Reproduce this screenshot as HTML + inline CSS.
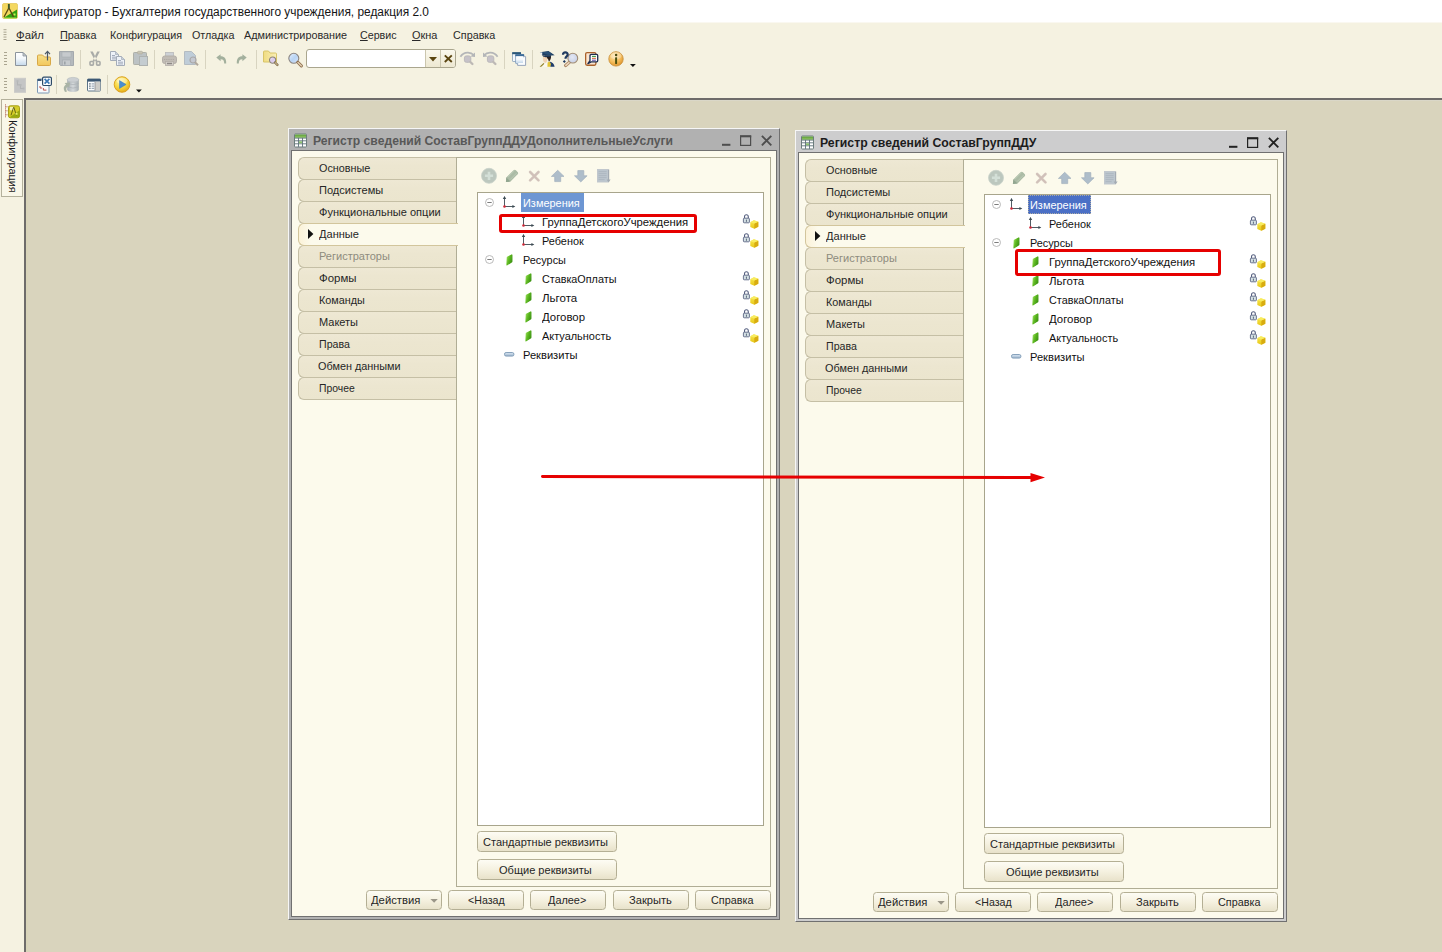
<!DOCTYPE html>
<html><head><meta charset="utf-8"><title>Конфигуратор</title><style>
*{box-sizing:border-box;margin:0;padding:0}
html,body{width:1442px;height:952px;overflow:hidden}
body{background:#f5f2e1;font-family:"Liberation Sans",sans-serif;font-size:11.5px;color:#000;position:relative}
.abs{position:absolute}
svg{overflow:visible}
.t{position:absolute;white-space:pre;line-height:1}
#titlebar{position:absolute;left:0;top:0;width:1442px;height:23px;background:linear-gradient(#fff 22px,#faf8f0 22px)}
#work{position:absolute;left:24px;top:98px;width:1418px;height:854px;background:#d9d4bd;border-left:2px solid #6e6c6a;border-top:2px solid #6e6c6a;box-shadow:inset 2px 0 0 #d8d4b9,inset 0 1px 0 #dad7c8}
#sidetab{position:absolute;left:1px;top:99px;width:22px;height:98px;border:1px solid #b4b19c;background:#f9f7e8}
#search{position:absolute;left:306px;top:49px;width:150px;height:19px;border:1px solid #aaa68e;border-radius:3px;background:#fff;overflow:hidden}
#search i{position:absolute;top:0;height:17px;border-left:1px solid #cbc6ae;background:linear-gradient(#faf8ec,#ede8d2)}
.win{position:absolute;width:492px;height:791px}
.win .frame{position:absolute;left:0;top:-1px;width:492px;height:792px;border:1px solid;border-color:#f6f6f6 #707070 #707070 #f6f6f6}
.win .content{position:absolute;left:3px;top:21px;width:486px;height:767px;background:#fcfaec;border:1px solid #707070}
.tab{position:absolute;left:10px;width:159px;height:23px;border:1px solid #c5bfa5;border-right:none;border-radius:6px 0 0 6px;background:linear-gradient(#eee8d4,#ece6d0 40%,#ebe5ce)}
.tab.act{background:linear-gradient(90deg,#fbf2d8,#fcfaec 12px);border-color:#d2c59c;width:160px;z-index:3}
.panel{position:absolute;left:168px;top:28px;width:315px;height:730px;border:1px solid #b0ad95;background:#fcfaec}
.tree{position:absolute;left:189px;top:63px;width:287px;height:634px;border:1px solid #a8a58c;background:#fff}
.btn{position:absolute;border:1px solid #b4af94;border-radius:3.5px;background:linear-gradient(#fdfcf4,#f5f1e0 50%,#e8e2ca)}
.red{position:absolute;border:3px solid #e60000;border-radius:3px}
.wt{z-index:5}
</style></head><body>
<svg width="0" height="0" style="position:absolute"><defs>
<linearGradient id="gDoc" x1="0" y1="0" x2="0" y2="1"><stop offset="0" stop-color="#ffffff"/><stop offset="0.45" stop-color="#f4f8fc"/><stop offset="1" stop-color="#c4d8ea"/></linearGradient>
<linearGradient id="gFold" x1="0" y1="0" x2="0" y2="1"><stop offset="0" stop-color="#f6e08a"/><stop offset="1" stop-color="#f2c75c"/></linearGradient>
<linearGradient id="gFold2" x1="0" y1="0" x2="1" y2="0"><stop offset="0" stop-color="#f0dc80"/><stop offset="1" stop-color="#f8eeb8"/></linearGradient>
<radialGradient id="gPlay" cx="0.4" cy="0.3" r="0.8"><stop offset="0" stop-color="#fff6b0"/><stop offset="0.5" stop-color="#f8d840"/><stop offset="1" stop-color="#e0a010"/></radialGradient>
<radialGradient id="gInfo" cx="0.4" cy="0.3" r="0.8"><stop offset="0" stop-color="#fde6b0"/><stop offset="0.55" stop-color="#f4bc58"/><stop offset="1" stop-color="#d88820"/></radialGradient>
<linearGradient id="gGreen" x1="0" y1="0" x2="1" y2="0.6"><stop offset="0" stop-color="#9ce060"/><stop offset="0.45" stop-color="#62bc24"/><stop offset="1" stop-color="#3c9410"/></linearGradient>
<linearGradient id="gCube1" x1="0" y1="0" x2="0" y2="1"><stop offset="0" stop-color="#f8e850"/><stop offset="1" stop-color="#e8c818"/></linearGradient>
<linearGradient id="gBar" x1="0" y1="0" x2="0" y2="1"><stop offset="0" stop-color="#dce8f4"/><stop offset="1" stop-color="#9cb4cc"/></linearGradient>
<linearGradient id="gTblH" x1="0" y1="0" x2="0" y2="1"><stop offset="0" stop-color="#5a9a38"/><stop offset="1" stop-color="#9ad068"/></linearGradient>
<linearGradient id="gLens" x1="0" y1="0" x2="1" y2="1"><stop offset="0" stop-color="#e8f0fc"/><stop offset="0.5" stop-color="#b8d4f4"/><stop offset="1" stop-color="#d8e4f8"/></linearGradient>
<linearGradient id="gLensP" x1="0" y1="0" x2="1" y2="1"><stop offset="0" stop-color="#efe6f8"/><stop offset="0.5" stop-color="#d8c8ec"/><stop offset="1" stop-color="#e8e0f4"/></linearGradient>
<radialGradient id="gLens2" cx="0.45" cy="0.4" r="0.7"><stop offset="0" stop-color="#e4e8f4"/><stop offset="0.7" stop-color="#ccd4e8"/><stop offset="1" stop-color="#dcd8e0"/></radialGradient>
<linearGradient id="gDb" x1="0" y1="0" x2="1" y2="0"><stop offset="0" stop-color="#a8b0b4"/><stop offset="0.5" stop-color="#d4d8da"/><stop offset="1" stop-color="#a4acb0"/></linearGradient>
</defs></svg>
<div id="titlebar"></div>
<svg class="abs" style="left:2px;top:3px;" width="16" height="16" viewBox="0 0 16 16"><rect x="0.5" y="0.5" width="15" height="15" rx="1.5" fill="#f4d860" stroke="#e8d070"/><path d="M15 6.5 L15 15 L1.5 15 Z" fill="#30a010"/><path d="M2 15 L14.5 15" stroke="#a0e050" stroke-width="1"/><rect x="11.5" y="10.5" width="2" height="2" fill="#c8f050"/><path d="M6.8 1.2 L6.8 5 L2 14 M7 5 L11.5 14" stroke="#5a4a10" stroke-width="1.3" fill="none"/><path d="M6.8 1 L6.8 5.5" stroke="#3a5a30" stroke-width="1.8"/></svg>
<span class="t" style="left:23.1px;top:6.3px;font-size:12.5px;color:#141414;transform-origin:0 0;transform:scaleX(0.9525);">Конфигуратор - Бухгалтерия государственного учреждения, редакция 2.0</span>
<svg class="abs" style="left:3px;top:29px;" width="4" height="15" viewBox="0 0 4 15"><g transform="translate(0.5,0.2)"><rect x="0" y="0.0" width="3" height="1" fill="#aaa590"/><rect x="0" y="2.45" width="3" height="1" fill="#aaa590"/><rect x="0" y="4.9" width="3" height="1" fill="#aaa590"/><rect x="0" y="7.35" width="3" height="1" fill="#aaa590"/><rect x="0" y="9.8" width="3" height="1" fill="#aaa590"/></g></svg>
<span class="t" style="left:16.1px;top:29.9px;font-size:11.5px;color:#2a2a2a;transform-origin:0 0;transform:scaleX(0.9865);"><u>Ф</u>айл</span>
<span class="t" style="left:60.3px;top:29.9px;font-size:11.5px;color:#2a2a2a;transform-origin:0 0;transform:scaleX(0.9419);"><u>П</u>равка</span>
<span class="t" style="left:110.3px;top:29.9px;font-size:11.5px;color:#2a2a2a;transform-origin:0 0;transform:scaleX(0.9341);">Конфигурация</span>
<span class="t" style="left:191.5px;top:29.9px;font-size:11.5px;color:#2a2a2a;transform-origin:0 0;transform:scaleX(0.9347);">Отладка</span>
<span class="t" style="left:244px;top:29.9px;font-size:11.5px;color:#2a2a2a;transform-origin:0 0;transform:scaleX(0.9401);">Администрирование</span>
<span class="t" style="left:359.9px;top:29.9px;font-size:11.5px;color:#2a2a2a;transform-origin:0 0;transform:scaleX(0.9292);"><u>С</u>ервис</span>
<span class="t" style="left:411.9px;top:29.9px;font-size:11.5px;color:#2a2a2a;transform-origin:0 0;transform:scaleX(0.9501);"><u>О</u>кна</span>
<span class="t" style="left:452.8px;top:29.9px;font-size:11.5px;color:#2a2a2a;transform-origin:0 0;transform:scaleX(0.9371);">Сп<u>р</u>авка</span>
<svg class="abs" style="left:4px;top:52px;" width="3" height="14" viewBox="0 0 3 14"><rect x="0" y="0" width="3" height="1" fill="#aaa590"/><rect x="0" y="3" width="3" height="1" fill="#aaa590"/><rect x="0" y="6" width="3" height="1" fill="#aaa590"/><rect x="0" y="9" width="3" height="1" fill="#aaa590"/><rect x="0" y="12" width="3" height="1" fill="#aaa590"/></svg>
<svg class="abs" style="left:15px;top:52px;" width="12" height="14" viewBox="0 0 12 14"><path d="M0.5 0.5 L8 0.5 L11.5 4 L11.5 13.5 L0.5 13.5 Z" fill="url(#gDoc)" stroke="#8c949c"/><path d="M8 0.5 L8 4 L11.5 4 Z" fill="#c8ccd0" stroke="#8c949c" stroke-width="0.8"/></svg>
<svg class="abs" style="left:37px;top:51px;" width="14" height="15" viewBox="0 0 14 15"><path d="M0.5 5 Q0.5 4 1.5 4 L5.5 4 L7.5 6 L12.5 6 Q13.5 6 13.5 7 L13.5 13.5 Q13.5 14.5 12.5 14.5 L1.5 14.5 Q0.5 14.5 0.5 13.5 Z" fill="url(#gFold)" stroke="#d8a848"/><path d="M10.5 9.5 L10.5 1" stroke="#4a5868" stroke-width="1.2"/><path d="M8 3.2 L10.5 0.4 L13 3.2" stroke="#4a5868" stroke-width="1.2" fill="none"/></svg>
<svg class="abs" style="left:59px;top:51px;" width="15" height="15" viewBox="0 0 15 15"><path d="M0.5 0.5 L14.5 0.5 L14.5 14.5 L1.5 14.5 L0.5 13.5 Z" fill="#b4b9bd" stroke="#a4a9ad"/><rect x="3" y="1" width="9" height="5" fill="#c6cacd" stroke="#a9aeb2" stroke-width="0.6"/><rect x="3.5" y="9" width="8" height="5.5" fill="#c6cacd" stroke="#a4a9ad" stroke-width="0.6"/><rect x="5" y="10.5" width="1.6" height="3" fill="#9ca2a8"/></svg>
<div class="abs" style="left:80px;top:50px;width:1px;height:19px;background:#d8d4c0"></div>
<svg class="abs" style="left:89px;top:51px;" width="12" height="15" viewBox="0 0 12 15"><path d="M1.2 0.4 L3.8 0.4 L8.6 10.6 L6.4 10.6 Z M10.8 0.4 L8.2 0.4 L3.4 10.6 L5.6 10.6 Z" fill="#a9aba8"/><rect x="1" y="10.5" width="3.4" height="3.6" rx="0.8" fill="#f4f1e0" stroke="#a9aba8" stroke-width="1.6"/><rect x="7.6" y="10.5" width="3.4" height="3.6" rx="0.8" fill="#f4f1e0" stroke="#a9aba8" stroke-width="1.6"/></svg>
<svg class="abs" style="left:110px;top:51px;" width="15" height="15" viewBox="0 0 15 15"><path d="M0.5 0.5 L5.5 0.5 L8.5 3.5 L8.5 9.5 L0.5 9.5 Z" fill="#eef2f8" stroke="#a4acb8"/><path d="M5.5 0.5 L5.5 3.5 L8.5 3.5" fill="#c8d0d8" stroke="#a4acb8" stroke-width="0.7"/><path d="M2 4.5 h3 M2 6.2 h5 M2 7.9 h5" stroke="#9aa4b4" stroke-width="0.9"/><path d="M6.5 5.5 L11.5 5.5 L14.5 8.5 L14.5 14.5 L6.5 14.5 Z" fill="#eef2f8" stroke="#a4acb8"/><path d="M11.5 5.5 L11.5 8.5 L14.5 8.5" fill="#c8d0d8" stroke="#a4acb8" stroke-width="0.7"/><path d="M8 9.5 h3 M8 11.2 h5 M8 12.9 h5" stroke="#9aa4b4" stroke-width="0.9"/></svg>
<svg class="abs" style="left:133px;top:51px;" width="15" height="15" viewBox="0 0 15 15"><rect x="0.5" y="1.5" width="13" height="12" rx="0.8" fill="#bcc2c4" stroke="#aeb0a8"/><rect x="4.5" y="0.3" width="5" height="2.6" rx="1" fill="#c8c4b4" stroke="#b0ac9c" stroke-width="0.7"/><rect x="6.5" y="5.5" width="8" height="9" fill="#c4ccd0" stroke="#aeb2b0"/><path d="M6.5 5.5 L6.5 13" stroke="#aeb2b0"/></svg>
<div class="abs" style="left:154px;top:50px;width:1px;height:19px;background:#d8d4c0"></div>
<svg class="abs" style="left:162px;top:52px;" width="15" height="14" viewBox="0 0 15 14"><rect x="3.5" y="0.5" width="8" height="5" fill="#cdd1d6" stroke="#b9b9bb" stroke-width="0.8"/><rect x="0.5" y="4" width="14" height="7.5" rx="2.2" fill="#c1bcb5" stroke="#b3aea8"/><path d="M2 7.5 h11" stroke="#a9a49e" stroke-width="0.8" stroke-dasharray="1.2 1"/><rect x="3.5" y="9.5" width="8" height="4" fill="#d2cec8" stroke="#b3aea8" stroke-width="0.8"/><rect x="5" y="10.8" width="5" height="1.4" fill="#8c8884"/></svg>
<svg class="abs" style="left:184px;top:51px;" width="15" height="15" viewBox="0 0 15 15"><path d="M0.5 0.5 L7.5 0.5 L11.5 4.5 L11.5 13.5 L0.5 13.5 Z" fill="#bfcdd8" stroke="#b4bcc2"/><circle cx="9" cy="9" r="3" fill="#c4c8d0" stroke="#aaa8a8" stroke-width="1.2"/><path d="M11.2 11.4 L14 14.2" stroke="#b0a89c" stroke-width="2"/></svg>
<div class="abs" style="left:205px;top:50px;width:1px;height:19px;background:#d8d4c0"></div>
<svg class="abs" style="left:216px;top:54px;" width="11" height="10" viewBox="0 0 11 10"><g><path d="M0.3 3.6 L4.6 0.2 L4.6 2.2 C8.5 2.2 10.4 4.4 10.2 9.6 L8.2 9.6 C8.2 6.6 7.4 5.2 4.6 5.2 L4.6 7.2 Z" fill="#a3b09d"/></g></svg>
<svg class="abs" style="left:236px;top:54px;" width="11" height="10" viewBox="0 0 11 10"><g transform="translate(11,0) scale(-1,1)"><path d="M0.3 3.6 L4.6 0.2 L4.6 2.2 C8.5 2.2 10.4 4.4 10.2 9.6 L8.2 9.6 C8.2 6.6 7.4 5.2 4.6 5.2 L4.6 7.2 Z" fill="#a3b09d"/></g></svg>
<div class="abs" style="left:256px;top:50px;width:1px;height:19px;background:#d8d4c0"></div>
<svg class="abs" style="left:263px;top:50px;" width="16" height="17" viewBox="0 0 16 17"><g transform="translate(0,0.5)"><path d="M0.5 1.5 Q0.5 0.5 1.5 0.5 L5.5 0.5 L7 2.5 L12.5 2.5 Q13.5 2.5 13.5 3.5 L13.5 11.5 L0.5 11.5 Z" fill="url(#gFold2)" stroke="#d8c468"/><circle cx="9.6" cy="9.6" r="3.1" fill="url(#gLensP)" stroke="#8c8478" stroke-width="1.1"/><path d="M12 12 L14.4 14.4" stroke="#7a6a4a" stroke-width="2.4" stroke-linecap="round"/><path d="M12.2 12.2 L14.3 14.3" stroke="#c8b088" stroke-width="1.1" stroke-linecap="round"/></g></svg>
<svg class="abs" style="left:288px;top:52px;" width="15" height="16" viewBox="0 0 15 16"><g transform="translate(0,0.5)"><circle cx="5.8" cy="5.8" r="5" fill="url(#gLens)" stroke="#8a8480" stroke-width="1.1"/><path d="M9.8 9.8 L13.4 13.4" stroke="#8a6a48" stroke-width="3" stroke-linecap="round"/><path d="M10 10 L13.3 13.3" stroke="#e0cdb0" stroke-width="1.6" stroke-linecap="round"/></g></svg>
<div id="search"><i style="left:118px;width:15px"></i><i style="left:133px;width:16px"></i></div>
<svg class="abs" style="left:429px;top:57px;" width="8" height="5" viewBox="0 0 8 5"><path d="M0 0 L8 0 L4 4.6 Z" fill="#5a4510"/></svg>
<svg class="abs" style="left:444px;top:54px;" width="9" height="9" viewBox="0 0 9 9"><g transform="translate(0,0.6)"><path d="M0.8 0.8 L7.8 7.4 M7.8 0.8 L0.8 7.4" stroke="#5a4510" stroke-width="1.9"/></g></svg>
<svg class="abs" style="left:460px;top:52px;" width="16" height="14" viewBox="0 0 16 14"><g><path d="M0.4 4.8 Q3 0.4 8 0.6 Q11.6 0.8 13.8 3" stroke="#b4b6b8" stroke-width="1.7" fill="none"/><path d="M15 0.4 L15 5 L10.4 4.6 Z" fill="#b4b6b8"/></g><rect x="4.4" y="3.9" width="6.4" height="6.4" rx="2" fill="#c6c2c8" stroke="#bab8ba" stroke-width="1"/><path d="M10.4 10 L12.4 12" stroke="#bdb9b5" stroke-width="2.4" stroke-linecap="round"/></svg>
<svg class="abs" style="left:483px;top:52px;" width="16" height="14" viewBox="0 0 16 14"><g transform="translate(15,0) scale(-1,1)"><path d="M0.4 4.8 Q3 0.4 8 0.6 Q11.6 0.8 13.8 3" stroke="#b4b6b8" stroke-width="1.7" fill="none"/><path d="M15 0.4 L15 5 L10.4 4.6 Z" fill="#b4b6b8"/></g><rect x="4.4" y="3.9" width="6.4" height="6.4" rx="2" fill="#c6c2c8" stroke="#bab8ba" stroke-width="1"/><path d="M10.4 10 L12.4 12" stroke="#bdb9b5" stroke-width="2.4" stroke-linecap="round"/></svg>
<div class="abs" style="left:504px;top:50px;width:1px;height:19px;background:#d8d4c0"></div>
<svg class="abs" style="left:512px;top:52px;" width="15" height="15" viewBox="0 0 15 15"><rect x="0.5" y="0.5" width="8.2" height="9" rx="0.6" fill="#f4f8fc" stroke="#88a0b8" stroke-width="0.8"/><rect x="0.2" y="0.2" width="8.8" height="2" fill="#2c5878"/><rect x="3.6" y="2.6" width="8.2" height="9" rx="0.6" fill="url(#gDoc)" stroke="#7c98b8" stroke-width="0.8"/><rect x="3.3" y="2.2" width="8.8" height="2" fill="#3c6c98"/><path d="M12.2 4.6 L13.6 4.6 L13.6 13.4 L5.6 13.4 L5.6 12" stroke="#8c9cb4" stroke-width="0.9" fill="#fafcfe"/><rect x="4.4" y="4.6" width="6.6" height="6.4" fill="url(#gDoc)"/></svg>
<div class="abs" style="left:532px;top:50px;width:1px;height:19px;background:#d8d4c0"></div>
<svg class="abs" style="left:539px;top:51px;" width="16" height="16" viewBox="0 0 16 16"><path d="M4 5 Q3.4 11.4 6.4 12 Q8.6 11.6 8.4 5.6 Z" fill="#f0d2b2"/><path d="M6 4.4 L12 4.4 Q12.4 8.6 9.8 10.4 Q9.4 8 8.4 7.6 L7.2 5.8 L6 6.6 Z" fill="#2c2220"/><path d="M0.9 1.3 L9.5 0 L15.7 4.2 L9.2 4.8 L3.4 4.5 Z" fill="#1f3f62"/><path d="M2 1.6 L9.4 0.5 L13.6 3.4 L9 3.8 Z" fill="#2f5880" opacity="0.7"/><path d="M3.4 4.5 L9.2 4.8 L12.2 4.5 L12 5.6 Q8 6.6 4 5.6 Z" fill="#1a3454"/><path d="M1.1 1.3 L3.3 1.5 L3.2 4 L1.5 3.6 Z" fill="#f4f6f8"/><path d="M4.4 12 L6.4 12.2 L8.8 11.2 L9 16 L4.4 16 Z" fill="#fbf8ee"/><path d="M0.6 15.8 L4.6 12 L5.4 12.8 L2.2 15.8 Z" fill="#8e7e24"/><path d="M8.6 11.4 L10.6 10.6 L12.4 12.6 L11.6 15.8 L8.4 15.8 Z" fill="#e2c434"/><path d="M10.6 10.6 Q14.8 11.6 15.6 15.8 L11.4 15.8 L12 13 Z" fill="#1f3d6c"/></svg>
<svg class="abs" style="left:562px;top:51px;" width="17" height="16" viewBox="0 0 17 16"><g transform="translate(0,0.5)"><path d="M7.8 10.4 L3.6 14" stroke="#a88460" stroke-width="3.2" stroke-linecap="round"/><path d="M7.6 10.6 L3.8 13.8" stroke="#ecd6bc" stroke-width="1.6" stroke-linecap="round"/><circle cx="10.8" cy="6.65" r="4.9" fill="url(#gLens2)" stroke="#a08c74" stroke-width="1.1"/><path d="M1 3.2 Q1 0.9 3.3 0.9 Q5.7 0.9 5.7 3.1 Q5.7 4.3 4.4 5.2 Q3.5 5.9 3.5 7.2" stroke="#203a60" stroke-width="2.2" fill="none"/><path d="M2.3 8.6 L3.8 10.1 L2.3 11.6 L0.8 10.1 Z" fill="#203a60"/></g></svg>
<svg class="abs" style="left:585px;top:52px;" width="14" height="14" viewBox="0 0 14 14"><rect x="0.65" y="0.65" width="10.2" height="12.6" rx="1.4" fill="#fbe6d0" stroke="#aa622c" stroke-width="1.3"/><path d="M6.4 2.4 L11.6 2.4 Q12.7 2.4 12.7 3.5 L12.7 8.8 Q12.7 9.9 11.6 9.9 L6.2 9.9 L2.9 11.6 L5 8.6 L5 3.5 Q5 2.4 6.4 2.4 Z" fill="#fff" stroke="#1e2e50" stroke-width="1.3" stroke-linejoin="round"/><path d="M7 4.4 h3.9" stroke="#3c9840" stroke-width="1.1"/><path d="M7 6.3 h3.9" stroke="#d06838" stroke-width="1.1"/><path d="M7 8.2 h3.9" stroke="#6050a8" stroke-width="1.1"/></svg>
<svg class="abs" style="left:607px;top:50px;" width="18" height="18" viewBox="0 0 18 18"><g transform="translate(0.5,0.5)"><circle cx="8.5" cy="8.4" r="7.2" fill="url(#gInfo)" stroke="#cc9440" stroke-width="0.9"/><ellipse cx="8.5" cy="5.2" rx="5.6" ry="3.6" fill="#fff" opacity="0.28"/><circle cx="8.6" cy="4.6" r="1.25" fill="#4a4a10"/><rect x="7.6" y="6.8" width="2" height="6.6" rx="0.4" fill="#4c5010"/></g></svg>
<svg class="abs" style="left:630px;top:64px;" width="6" height="4" viewBox="0 0 6 4"><path d="M0 0 L5.8 0 L2.9 3 Z" fill="#111"/></svg>
<svg class="abs" style="left:4px;top:78px;" width="3" height="14" viewBox="0 0 3 14"><rect x="0" y="0" width="3" height="1" fill="#aaa590"/><rect x="0" y="3" width="3" height="1" fill="#aaa590"/><rect x="0" y="6" width="3" height="1" fill="#aaa590"/><rect x="0" y="9" width="3" height="1" fill="#aaa590"/><rect x="0" y="12" width="3" height="1" fill="#aaa590"/></svg>
<svg class="abs" style="left:14px;top:77px;" width="12" height="16" viewBox="0 0 12 16"><g transform="translate(0,0.8)"><rect x="0.5" y="0.5" width="11" height="14" fill="#c4c5c5" stroke="#cbcbc8"/><path d="M3.5 3.5 v3.6 h3 M6.5 7.1 v3.6 h3" stroke="#b3b5b5" stroke-width="1.1" fill="none"/><rect x="2.6" y="2.4" width="1.8" height="1.8" fill="#b6b8b8"/><rect x="5.8" y="6.2" width="1.8" height="1.8" fill="#b6b8b8"/><rect x="8.6" y="9.8" width="1.8" height="1.8" fill="#b6b8b8"/></g></svg>
<svg class="abs" style="left:37px;top:76px;" width="15" height="18" viewBox="0 0 15 18"><g transform="translate(0,0.5)"><rect x="0.5" y="2.5" width="11.5" height="14" rx="0.6" fill="#f8fafc" stroke="#7c98b4"/><rect x="0.5" y="2.5" width="4" height="2" fill="#3a5878"/><path d="M3 9.5 v2 h2.2 M6.4 11.6 v2 h3" stroke="#c05048" stroke-width="1" fill="none"/><rect x="5.6" y="0.6" width="8.8" height="8.4" rx="1.2" fill="#fff" stroke="#2c4a68" stroke-width="1.2"/><path d="M7.6 2.4 L12.4 7.2 M12.4 2.4 L7.6 7.2" stroke="#3c78b4" stroke-width="1.7"/></g></svg>
<div class="abs" style="left:56px;top:75px;width:1px;height:19px;background:#d8d4c0"></div>
<svg class="abs" style="left:62px;top:77px;" width="18" height="16" viewBox="0 0 18 16"><g transform="translate(0.6,0)"><path d="M4.6 2.6 L4.6 12.6 Q4.6 15 10.4 15 Q16.2 15 16.2 12.6 L16.2 2.6 Z" fill="url(#gDb)"/><ellipse cx="10.4" cy="2.8" rx="5.8" ry="2.4" fill="#cbcfd2" stroke="#b2b8bc" stroke-width="0.6"/><path d="M4.6 6.4 Q10.4 9 16.2 6.4 M4.6 9.8 Q10.4 12.4 16.2 9.8" stroke="#aab0b4" stroke-width="0.7" fill="none"/><path d="M2.4 15 Q-0.6 10.4 3.4 7.6 L2 6 L7.4 5.6 L6.6 10.8 L5.2 9.4 Q2.6 11.4 4.4 14.4 Z" fill="#a9b3a5"/></g></svg>
<svg class="abs" style="left:87px;top:78px;" width="14" height="14" viewBox="0 0 14 14"><g transform="translate(0,0.5)"><rect x="0.5" y="0.5" width="13" height="12" rx="0.8" fill="#fbfcfd" stroke="#5c7488"/><rect x="0.5" y="0.5" width="13" height="2.6" fill="#3c5874"/><rect x="8" y="3.2" width="5.4" height="9" fill="#cdccc8"/><path d="M8 3.2 v9" stroke="#8a8c90" stroke-width="0.8"/><path d="M2.2 5.4 h1.4 M2.2 7.6 h1.4 M2.2 9.8 h1.4" stroke="#4c5c6c" stroke-width="1.1"/><path d="M4.6 5.4 h2.6 M4.6 7.6 h2.6 M4.6 9.8 h2.6" stroke="#8898a8" stroke-width="1"/></g></svg>
<div class="abs" style="left:107px;top:75px;width:1px;height:19px;background:#d8d4c0"></div>
<svg class="abs" style="left:113px;top:76px;" width="18" height="17" viewBox="0 0 18 17"><g transform="translate(0.5,0)"><circle cx="8.5" cy="8.5" r="7.8" fill="url(#gPlay)" stroke="#d89c18" stroke-width="0.9"/><ellipse cx="8.5" cy="4.8" rx="5.4" ry="3" fill="#fff" opacity="0.35"/><path d="M6 4.6 L12.6 8.5 L6 12.4 Z" fill="#4a8ed0" stroke="#3878b8" stroke-width="0.5"/></g></svg>
<svg class="abs" style="left:136px;top:89px;" width="6" height="5" viewBox="0 0 6 5"><g transform="translate(0,0.5)"><path d="M0 0 L5.8 0 L2.9 3 Z" fill="#111"/></g></svg>
<div id="sidetab"></div>
<svg class="abs" style="left:4px;top:104px;" width="16" height="16" viewBox="0 0 16 16"><g transform="translate(0,0.3)"><path d="M1.5 0 v13 M1.5 2.5 h3 M1.5 6.5 h3 M1.5 10.5 h3" stroke="#b06858" stroke-width="0.9" fill="none" stroke-dasharray="1.2 0.8"/><rect x="4.5" y="1.5" width="11" height="12" rx="1.8" fill="#d4cc28" stroke="#a8a018"/><path d="M15.5 6 L15.5 12 Q15.5 13.5 14 13.5 L5 13.5 Z" fill="#98a810"/><rect x="6" y="2.6" width="4" height="3.4" fill="#f4f4c0" opacity="0.9"/><path d="M9.6 3 L7 11 M9.8 3 L12.4 11" stroke="#5a5a10" stroke-width="0.9"/><rect x="11.5" y="8.5" width="2" height="2" fill="#e8f060"/></g></svg>
<span class="t" style="left:18.1px;top:120.0px;font-size:11.5px;color:#1a1a1a;transform-origin:0 0;transform:rotate(90deg) scaleX(0.9406);">Конфигурация</span>
<div id="work"></div>
<div class="win" style="left:288px;top:129px;background:#b1b1b1">
<div class="frame"></div>
<svg class="abs" style="left:6px;top:4px;" width="13" height="15" viewBox="0 0 13 15"><g transform="translate(0,0.5)"><rect x="0.5" y="0.5" width="12" height="13" rx="0.8" fill="#fff" stroke="#6c7c7c"/><rect x="1" y="1" width="11" height="3.4" fill="url(#gTblH)"/><path d="M4.5 4.4 v9 M8.5 4.4 v9 M1 7.3 h11 M1 10.3 h11 M1 4.6 h11" stroke="#5c7078" stroke-width="0.9"/><rect x="5" y="7.8" width="3" height="2" fill="#8cc070"/></g></svg>
<span class="t" style="left:24.9px;top:5.9px;font-size:12.5px;color:#585858;font-weight:bold;transform-origin:0 0;transform:scaleX(0.972);">Регистр сведений СоставГруппДДУДополнительныеУслуги</span>
<svg class="abs" style="left:434px;top:14px;" width="9" height="4" viewBox="0 0 9 4"><g transform="translate(0,0.8)"><rect x="0" y="0" width="8.4" height="2" fill="#4e4e4e"/></g></svg>
<svg class="abs" style="left:452px;top:6px;" width="12" height="12" viewBox="0 0 12 12"><g transform="translate(0,0.4)"><rect x="0.6" y="0.6" width="10" height="9.4" fill="none" stroke="#4e4e4e" stroke-width="1.2"/><rect x="0" y="0" width="11.2" height="1.9" fill="#4e4e4e"/></g></svg>
<svg class="abs" style="left:473px;top:6px;" width="12" height="12" viewBox="0 0 12 12"><g transform="translate(0.3,0.3)"><path d="M0.6 0.6 L10 10 M10 0.6 L0.6 10" stroke="#4e4e4e" stroke-width="1.9"/></g></svg>
<div class="content"></div>
<div class="tab" style="top:28px"></div>
<div class="tab" style="top:50px"></div>
<div class="tab" style="top:72px"></div>
<div class="tab act" style="top:94px"></div>
<div class="tab" style="top:116px"></div>
<div class="tab" style="top:138px"></div>
<div class="tab" style="top:160px"></div>
<div class="tab" style="top:182px"></div>
<div class="tab" style="top:204px"></div>
<div class="tab" style="top:226px"></div>
<div class="tab" style="top:248px"></div>
<div class="panel"></div>
<span class="t wt" style="left:30.5px;top:33.8px;font-size:11.5px;color:#262626;transform-origin:0 0;transform:scaleX(0.9418);">Основные</span>
<span class="t wt" style="left:30.5px;top:55.8px;font-size:11.5px;color:#262626;transform-origin:0 0;transform:scaleX(0.9618);">Подсистемы</span>
<span class="t wt" style="left:30.5px;top:77.8px;font-size:11.5px;color:#262626;transform-origin:0 0;transform:scaleX(0.9583);">Функциональные опции</span>
<span class="t wt" style="left:30.5px;top:99.8px;font-size:11.5px;color:#262626;transform-origin:0 0;transform:scaleX(0.9624);">Данные</span>
<span class="t wt" style="left:30.5px;top:121.8px;font-size:11.5px;color:#8e8c7e;transform-origin:0 0;transform:scaleX(0.9576);">Регистраторы</span>
<span class="t wt" style="left:30.5px;top:143.8px;font-size:11.5px;color:#262626;transform-origin:0 0;transform:scaleX(0.9942);">Формы</span>
<span class="t wt" style="left:30.5px;top:165.8px;font-size:11.5px;color:#262626;transform-origin:0 0;transform:scaleX(0.9418);">Команды</span>
<span class="t wt" style="left:30.5px;top:187.8px;font-size:11.5px;color:#262626;transform-origin:0 0;transform:scaleX(0.9556);">Макеты</span>
<span class="t wt" style="left:30.5px;top:209.8px;font-size:11.5px;color:#262626;transform-origin:0 0;transform:scaleX(0.9241);">Права</span>
<span class="t wt" style="left:30.0px;top:231.8px;font-size:11.5px;color:#262626;transform-origin:0 0;transform:scaleX(0.9437);">Обмен данными</span>
<span class="t wt" style="left:30.5px;top:253.8px;font-size:11.5px;color:#262626;transform-origin:0 0;transform:scaleX(0.9017);">Прочее</span>
<svg class="abs" style="left:20px;top:100px;z-index:5;" width="6" height="10" viewBox="0 0 6 10"><path d="M0 0 L5.4 5 L0 10 Z" fill="#111"/></svg>
<svg class="abs" style="left:192px;top:38px;" width="18" height="18" viewBox="0 0 18 18"><g transform="translate(0.5,0.5)"><circle cx="8.5" cy="8.3" r="7.5" fill="#bcc7be" stroke="#c9d2c9" stroke-width="0.8"/><path d="M8.5 4.2 v8.2 M4.4 8.3 h8.2" stroke="#d3dfd7" stroke-width="2.6"/></g></svg>
<svg class="abs" style="left:217px;top:40px;" width="14" height="14" viewBox="0 0 14 14"><g transform="translate(0.5,0.4)"><path d="M0.4 12.6 L0.8 8 L8 0.9 Q9.2 -0.1 10.4 0.9 L12.1 2.6 Q13.1 3.8 12.1 4.9 L5 12.2 Z" fill="#abbba5"/><path d="M0.4 12.6 L0.8 8.2 L5 12.2 Z" fill="#92a690"/><path d="M2.6 7.6 L9 1.3 M4.6 10.2 L11.2 3.6" stroke="#bfcdb9" stroke-width="0.8"/></g></svg>
<svg class="abs" style="left:240px;top:41px;" width="12" height="12" viewBox="0 0 12 12"><g transform="translate(0.7,0.6)"><path d="M1.4 1.4 L9.8 9.8 M9.8 1.4 L1.4 9.8" stroke="#d5c7bf" stroke-width="2.7" stroke-linecap="round"/><path d="M1.4 1.4 L9.8 9.8 M9.8 1.4 L1.4 9.8" stroke="#cdbbb5" stroke-width="1.1" stroke-linecap="round" opacity="0.6"/></g></svg>
<svg class="abs" style="left:262px;top:40px;" width="15" height="14" viewBox="0 0 15 14"><g transform="translate(0.7,0.8)"><g><path d="M7 0.5 L13.3 6.6 L10 6.6 L10 11.8 L4 11.8 L4 6.6 L0.7 6.6 Z" fill="#aebdca" stroke="#a2b0bd" stroke-width="0.7" stroke-linejoin="round"/></g></g></svg>
<svg class="abs" style="left:285px;top:41px;" width="15" height="13" viewBox="0 0 15 13"><g transform="translate(0.8,0)"><g transform="translate(0,12.4) scale(1,-1)"><path d="M7 0.5 L13.3 6.6 L10 6.6 L10 11.8 L4 11.8 L4 6.6 L0.7 6.6 Z" fill="#aebdca" stroke="#a2b0bd" stroke-width="0.7" stroke-linejoin="round"/></g></g></svg>
<svg class="abs" style="left:309px;top:40px;" width="14" height="14" viewBox="0 0 14 14"><rect x="0.5" y="0.5" width="10.5" height="12.5" fill="#bcc6ce" stroke="#c1c7cd"/><path d="M1.6 2.6 h8 M1.6 4.6 h8 M1.6 6.6 h8 M1.6 8.6 h8 M1.6 10.6 h6" stroke="#aab4be" stroke-width="0.8"/><path d="M11.6 0.6 v11" stroke="#a3abb3" stroke-width="1.2"/><path d="M9.6 10.6 L13.6 10.6 L11.6 13.6 Z" fill="#a3abb3"/></svg>
<div class="tree"></div>
<svg class="abs" style="left:214px;top:67px;" width="13" height="13" viewBox="0 0 13 13"><path d="M2.5 10.5 V0.8 M2.5 10.5 H12.2" stroke="#3c4a52" stroke-width="0.9" fill="none"/><path d="M0.8 3 L2.5 0 L4.2 3 Z" fill="#3c4a52"/><path d="M10.4 8.9 L13.3 10.5 L10.4 12.1 Z" fill="#3c4a52"/><circle cx="2.5" cy="10.5" r="1.3" fill="#d02838"/></svg>
<svg class="abs" style="left:196px;top:68px;" width="11" height="11" viewBox="0 0 11 11"><g transform="translate(0.5,0.5)"><circle cx="5" cy="5" r="4" fill="#fff" stroke="#b2b2b2" stroke-width="0.9"/><path d="M2.8 5 h4.4" stroke="#7c7c7c" stroke-width="1"/></g></svg>
<div class="abs" style="left:233px;top:64px;width:63px;height:19px;background:#6d96d3"></div>
<span class="t" style="left:234.8px;top:68.6px;font-size:11.5px;color:#fff;transform-origin:0 0;transform:scaleX(0.9524);">Измерения</span>
<svg class="abs" style="left:233px;top:86px;" width="13" height="13" viewBox="0 0 13 13"><path d="M2.5 10.5 V0.8 M2.5 10.5 H12.2" stroke="#3c4a52" stroke-width="0.9" fill="none"/><path d="M0.8 3 L2.5 0 L4.2 3 Z" fill="#3c4a52"/><path d="M10.4 8.9 L13.3 10.5 L10.4 12.1 Z" fill="#3c4a52"/><circle cx="2.5" cy="10.5" r="1.3" fill="#d02838"/></svg>
<span class="t" style="left:253.9px;top:87.6px;font-size:11.5px;color:#111;transform-origin:0 0;transform:scaleX(0.9819);">ГруппаДетскогоУчреждения</span>
<svg class="abs" style="left:454px;top:85px;" width="17" height="16" viewBox="0 0 17 16"><g transform="translate(0.9,0.2)"><path d="M1.6 4.4 V2.6 Q1.6 0.6 3.5 0.6 Q5.4 0.6 5.4 2.6 V4.4" stroke="#566080" stroke-width="1.1" fill="none"/><rect x="0.5" y="4" width="6" height="4.6" rx="0.8" fill="#d4e0e4" stroke="#5c6684" stroke-width="0.9"/><rect x="3" y="5.4" width="1" height="2.2" fill="#5c6a7c"/><path d="M7.4 8 L11 6 L15.4 7.6 L15.4 12.6 L11.4 14.6 L7.4 12.8 Z" fill="url(#gCube1)"/><path d="M11.4 9.4 L15.4 7.6 L15.4 12.6 L11.4 14.6 Z" fill="#d8ac10"/><path d="M7.4 8 L11 6 L15.4 7.6 L11.4 9.4 Z" fill="#f8ec60"/></g></svg>
<svg class="abs" style="left:233px;top:105px;" width="13" height="13" viewBox="0 0 13 13"><path d="M2.5 10.5 V0.8 M2.5 10.5 H12.2" stroke="#3c4a52" stroke-width="0.9" fill="none"/><path d="M0.8 3 L2.5 0 L4.2 3 Z" fill="#3c4a52"/><path d="M10.4 8.9 L13.3 10.5 L10.4 12.1 Z" fill="#3c4a52"/><circle cx="2.5" cy="10.5" r="1.3" fill="#d02838"/></svg>
<span class="t" style="left:253.9px;top:106.6px;font-size:11.5px;color:#111;transform-origin:0 0;transform:scaleX(0.9483);">Ребенок</span>
<svg class="abs" style="left:454px;top:104px;" width="17" height="16" viewBox="0 0 17 16"><g transform="translate(0.9,0.2)"><path d="M1.6 4.4 V2.6 Q1.6 0.6 3.5 0.6 Q5.4 0.6 5.4 2.6 V4.4" stroke="#566080" stroke-width="1.1" fill="none"/><rect x="0.5" y="4" width="6" height="4.6" rx="0.8" fill="#d4e0e4" stroke="#5c6684" stroke-width="0.9"/><rect x="3" y="5.4" width="1" height="2.2" fill="#5c6a7c"/><path d="M7.4 8 L11 6 L15.4 7.6 L15.4 12.6 L11.4 14.6 L7.4 12.8 Z" fill="url(#gCube1)"/><path d="M11.4 9.4 L15.4 7.6 L15.4 12.6 L11.4 14.6 Z" fill="#d8ac10"/><path d="M7.4 8 L11 6 L15.4 7.6 L11.4 9.4 Z" fill="#f8ec60"/></g></svg>
<svg class="abs" style="left:218px;top:125px;" width="7" height="12" viewBox="0 0 7 12"><path d="M1.4 3.4 L5.8 1 L5.8 7.6 L1 10.8 Z" fill="url(#gGreen)" stroke="url(#gGreen)" stroke-width="1.3" stroke-linejoin="round"/></svg>
<svg class="abs" style="left:196px;top:125px;" width="11" height="11" viewBox="0 0 11 11"><g transform="translate(0.5,0.5)"><circle cx="5" cy="5" r="4" fill="#fff" stroke="#b2b2b2" stroke-width="0.9"/><path d="M2.8 5 h4.4" stroke="#7c7c7c" stroke-width="1"/></g></svg>
<span class="t" style="left:234.8px;top:125.6px;font-size:11.5px;color:#111;transform-origin:0 0;transform:scaleX(0.9461);">Ресурсы</span>
<svg class="abs" style="left:237px;top:144px;" width="7" height="12" viewBox="0 0 7 12"><path d="M1.4 3.4 L5.8 1 L5.8 7.6 L1 10.8 Z" fill="url(#gGreen)" stroke="url(#gGreen)" stroke-width="1.3" stroke-linejoin="round"/></svg>
<span class="t" style="left:253.9px;top:144.6px;font-size:11.5px;color:#111;transform-origin:0 0;transform:scaleX(0.9395);">СтавкаОплаты</span>
<svg class="abs" style="left:454px;top:142px;" width="17" height="16" viewBox="0 0 17 16"><g transform="translate(0.9,0.2)"><path d="M1.6 4.4 V2.6 Q1.6 0.6 3.5 0.6 Q5.4 0.6 5.4 2.6 V4.4" stroke="#566080" stroke-width="1.1" fill="none"/><rect x="0.5" y="4" width="6" height="4.6" rx="0.8" fill="#d4e0e4" stroke="#5c6684" stroke-width="0.9"/><rect x="3" y="5.4" width="1" height="2.2" fill="#5c6a7c"/><path d="M7.4 8 L11 6 L15.4 7.6 L15.4 12.6 L11.4 14.6 L7.4 12.8 Z" fill="url(#gCube1)"/><path d="M11.4 9.4 L15.4 7.6 L15.4 12.6 L11.4 14.6 Z" fill="#d8ac10"/><path d="M7.4 8 L11 6 L15.4 7.6 L11.4 9.4 Z" fill="#f8ec60"/></g></svg>
<svg class="abs" style="left:237px;top:163px;" width="7" height="12" viewBox="0 0 7 12"><path d="M1.4 3.4 L5.8 1 L5.8 7.6 L1 10.8 Z" fill="url(#gGreen)" stroke="url(#gGreen)" stroke-width="1.3" stroke-linejoin="round"/></svg>
<span class="t" style="left:253.9px;top:163.6px;font-size:11.5px;color:#111;transform-origin:0 0;transform:scaleX(1.0008);">Льгота</span>
<svg class="abs" style="left:454px;top:161px;" width="17" height="16" viewBox="0 0 17 16"><g transform="translate(0.9,0.2)"><path d="M1.6 4.4 V2.6 Q1.6 0.6 3.5 0.6 Q5.4 0.6 5.4 2.6 V4.4" stroke="#566080" stroke-width="1.1" fill="none"/><rect x="0.5" y="4" width="6" height="4.6" rx="0.8" fill="#d4e0e4" stroke="#5c6684" stroke-width="0.9"/><rect x="3" y="5.4" width="1" height="2.2" fill="#5c6a7c"/><path d="M7.4 8 L11 6 L15.4 7.6 L15.4 12.6 L11.4 14.6 L7.4 12.8 Z" fill="url(#gCube1)"/><path d="M11.4 9.4 L15.4 7.6 L15.4 12.6 L11.4 14.6 Z" fill="#d8ac10"/><path d="M7.4 8 L11 6 L15.4 7.6 L11.4 9.4 Z" fill="#f8ec60"/></g></svg>
<svg class="abs" style="left:237px;top:182px;" width="7" height="12" viewBox="0 0 7 12"><path d="M1.4 3.4 L5.8 1 L5.8 7.6 L1 10.8 Z" fill="url(#gGreen)" stroke="url(#gGreen)" stroke-width="1.3" stroke-linejoin="round"/></svg>
<span class="t" style="left:253.9px;top:182.6px;font-size:11.5px;color:#111;transform-origin:0 0;transform:scaleX(0.9899);">Договор</span>
<svg class="abs" style="left:454px;top:180px;" width="17" height="16" viewBox="0 0 17 16"><g transform="translate(0.9,0.2)"><path d="M1.6 4.4 V2.6 Q1.6 0.6 3.5 0.6 Q5.4 0.6 5.4 2.6 V4.4" stroke="#566080" stroke-width="1.1" fill="none"/><rect x="0.5" y="4" width="6" height="4.6" rx="0.8" fill="#d4e0e4" stroke="#5c6684" stroke-width="0.9"/><rect x="3" y="5.4" width="1" height="2.2" fill="#5c6a7c"/><path d="M7.4 8 L11 6 L15.4 7.6 L15.4 12.6 L11.4 14.6 L7.4 12.8 Z" fill="url(#gCube1)"/><path d="M11.4 9.4 L15.4 7.6 L15.4 12.6 L11.4 14.6 Z" fill="#d8ac10"/><path d="M7.4 8 L11 6 L15.4 7.6 L11.4 9.4 Z" fill="#f8ec60"/></g></svg>
<svg class="abs" style="left:237px;top:201px;" width="7" height="12" viewBox="0 0 7 12"><path d="M1.4 3.4 L5.8 1 L5.8 7.6 L1 10.8 Z" fill="url(#gGreen)" stroke="url(#gGreen)" stroke-width="1.3" stroke-linejoin="round"/></svg>
<span class="t" style="left:253.9px;top:201.6px;font-size:11.5px;color:#111;transform-origin:0 0;transform:scaleX(0.9504);">Актуальность</span>
<svg class="abs" style="left:454px;top:199px;" width="17" height="16" viewBox="0 0 17 16"><g transform="translate(0.9,0.2)"><path d="M1.6 4.4 V2.6 Q1.6 0.6 3.5 0.6 Q5.4 0.6 5.4 2.6 V4.4" stroke="#566080" stroke-width="1.1" fill="none"/><rect x="0.5" y="4" width="6" height="4.6" rx="0.8" fill="#d4e0e4" stroke="#5c6684" stroke-width="0.9"/><rect x="3" y="5.4" width="1" height="2.2" fill="#5c6a7c"/><path d="M7.4 8 L11 6 L15.4 7.6 L15.4 12.6 L11.4 14.6 L7.4 12.8 Z" fill="url(#gCube1)"/><path d="M11.4 9.4 L15.4 7.6 L15.4 12.6 L11.4 14.6 Z" fill="#d8ac10"/><path d="M7.4 8 L11 6 L15.4 7.6 L11.4 9.4 Z" fill="#f8ec60"/></g></svg>
<svg class="abs" style="left:216px;top:223px;" width="11" height="5" viewBox="0 0 11 5"><rect x="0.5" y="0.5" width="9.4" height="3.6" rx="1.6" fill="url(#gBar)" stroke="#7c98b4" stroke-width="0.9"/></svg>
<span class="t" style="left:234.8px;top:220.6px;font-size:11.5px;color:#111;transform-origin:0 0;transform:scaleX(0.967);">Реквизиты</span>
<div class="red" style="left:211px;top:85px;width:198px;height:19px"></div>
<div class="btn" style="left:189px;top:702px;width:140px;height:21px"></div>
<div class="btn" style="left:189px;top:730px;width:140px;height:21px"></div>
<span class="t" style="left:194.9px;top:708.3px;font-size:11.5px;color:#262626;transform-origin:0 0;transform:scaleX(0.9579);">Стандартные реквизиты</span>
<span class="t" style="left:211.3px;top:736.4px;font-size:11.5px;color:#262626;transform-origin:0 0;transform:scaleX(0.9597);">Общие реквизиты</span>
<div class="btn" style="left:78px;top:761px;width:76px;height:20px"></div>
<span class="t" style="left:83px;top:765.9px;font-size:11.5px;color:#262626;transform-origin:0 0;transform:scaleX(0.9784);">Действия</span>
<div class="btn" style="left:160px;top:761px;width:76px;height:20px"></div>
<span class="t" style="left:179.5px;top:765.9px;font-size:11.5px;color:#262626;transform-origin:0 0;transform:scaleX(0.9251);">&lt;Назад</span>
<div class="btn" style="left:242px;top:761px;width:76px;height:20px"></div>
<span class="t" style="left:260.3px;top:765.9px;font-size:11.5px;color:#262626;transform-origin:0 0;transform:scaleX(0.9479);">Далее&gt;</span>
<div class="btn" style="left:325px;top:761px;width:76px;height:20px"></div>
<span class="t" style="left:341.1px;top:765.9px;font-size:11.5px;color:#262626;transform-origin:0 0;transform:scaleX(0.9685);">Закрыть</span>
<div class="btn" style="left:407px;top:761px;width:76px;height:20px"></div>
<span class="t" style="left:422.7px;top:765.9px;font-size:11.5px;color:#262626;transform-origin:0 0;transform:scaleX(0.9396);">Справка</span>
<svg class="abs" style="left:142px;top:770px;" width="8" height="5" viewBox="0 0 8 5"><g transform="translate(0.4,0)"><path d="M0 0 L7.4 0 L3.7 3.7 Z" fill="#9a9688"/></g></svg>
</div>
<div class="win" style="left:795px;top:131px;background:#cdcdce">
<div class="frame"></div>
<svg class="abs" style="left:6px;top:4px;" width="13" height="15" viewBox="0 0 13 15"><g transform="translate(0,0.5)"><rect x="0.5" y="0.5" width="12" height="13" rx="0.8" fill="#fff" stroke="#6c7c7c"/><rect x="1" y="1" width="11" height="3.4" fill="url(#gTblH)"/><path d="M4.5 4.4 v9 M8.5 4.4 v9 M1 7.3 h11 M1 10.3 h11 M1 4.6 h11" stroke="#5c7078" stroke-width="0.9"/><rect x="5" y="7.8" width="3" height="2" fill="#8cc070"/></g></svg>
<span class="t" style="left:24.9px;top:5.9px;font-size:12.5px;color:#1c1c1c;font-weight:bold;transform-origin:0 0;transform:scaleX(0.9803);">Регистр сведений СоставГруппДДУ</span>
<svg class="abs" style="left:434px;top:14px;" width="9" height="4" viewBox="0 0 9 4"><g transform="translate(0,0.8)"><rect x="0" y="0" width="8.4" height="2" fill="#222"/></g></svg>
<svg class="abs" style="left:452px;top:6px;" width="12" height="12" viewBox="0 0 12 12"><g transform="translate(0,0.4)"><rect x="0.6" y="0.6" width="10" height="9.4" fill="none" stroke="#222" stroke-width="1.2"/><rect x="0" y="0" width="11.2" height="1.9" fill="#222"/></g></svg>
<svg class="abs" style="left:473px;top:6px;" width="12" height="12" viewBox="0 0 12 12"><g transform="translate(0.3,0.3)"><path d="M0.6 0.6 L10 10 M10 0.6 L0.6 10" stroke="#222" stroke-width="1.9"/></g></svg>
<div class="content"></div>
<div class="tab" style="top:28px"></div>
<div class="tab" style="top:50px"></div>
<div class="tab" style="top:72px"></div>
<div class="tab act" style="top:94px"></div>
<div class="tab" style="top:116px"></div>
<div class="tab" style="top:138px"></div>
<div class="tab" style="top:160px"></div>
<div class="tab" style="top:182px"></div>
<div class="tab" style="top:204px"></div>
<div class="tab" style="top:226px"></div>
<div class="tab" style="top:248px"></div>
<div class="panel"></div>
<span class="t wt" style="left:30.5px;top:33.8px;font-size:11.5px;color:#262626;transform-origin:0 0;transform:scaleX(0.9418);">Основные</span>
<span class="t wt" style="left:30.5px;top:55.8px;font-size:11.5px;color:#262626;transform-origin:0 0;transform:scaleX(0.9618);">Подсистемы</span>
<span class="t wt" style="left:30.5px;top:77.8px;font-size:11.5px;color:#262626;transform-origin:0 0;transform:scaleX(0.9583);">Функциональные опции</span>
<span class="t wt" style="left:30.5px;top:99.8px;font-size:11.5px;color:#262626;transform-origin:0 0;transform:scaleX(0.9624);">Данные</span>
<span class="t wt" style="left:30.5px;top:121.8px;font-size:11.5px;color:#8e8c7e;transform-origin:0 0;transform:scaleX(0.9576);">Регистраторы</span>
<span class="t wt" style="left:30.5px;top:143.8px;font-size:11.5px;color:#262626;transform-origin:0 0;transform:scaleX(0.9942);">Формы</span>
<span class="t wt" style="left:30.5px;top:165.8px;font-size:11.5px;color:#262626;transform-origin:0 0;transform:scaleX(0.9418);">Команды</span>
<span class="t wt" style="left:30.5px;top:187.8px;font-size:11.5px;color:#262626;transform-origin:0 0;transform:scaleX(0.9556);">Макеты</span>
<span class="t wt" style="left:30.5px;top:209.8px;font-size:11.5px;color:#262626;transform-origin:0 0;transform:scaleX(0.9241);">Права</span>
<span class="t wt" style="left:30.0px;top:231.8px;font-size:11.5px;color:#262626;transform-origin:0 0;transform:scaleX(0.9437);">Обмен данными</span>
<span class="t wt" style="left:30.5px;top:253.8px;font-size:11.5px;color:#262626;transform-origin:0 0;transform:scaleX(0.9017);">Прочее</span>
<svg class="abs" style="left:20px;top:100px;z-index:5;" width="6" height="10" viewBox="0 0 6 10"><path d="M0 0 L5.4 5 L0 10 Z" fill="#111"/></svg>
<svg class="abs" style="left:192px;top:38px;" width="18" height="18" viewBox="0 0 18 18"><g transform="translate(0.5,0.5)"><circle cx="8.5" cy="8.3" r="7.5" fill="#bcc7be" stroke="#c9d2c9" stroke-width="0.8"/><path d="M8.5 4.2 v8.2 M4.4 8.3 h8.2" stroke="#d3dfd7" stroke-width="2.6"/></g></svg>
<svg class="abs" style="left:217px;top:40px;" width="14" height="14" viewBox="0 0 14 14"><g transform="translate(0.5,0.4)"><path d="M0.4 12.6 L0.8 8 L8 0.9 Q9.2 -0.1 10.4 0.9 L12.1 2.6 Q13.1 3.8 12.1 4.9 L5 12.2 Z" fill="#abbba5"/><path d="M0.4 12.6 L0.8 8.2 L5 12.2 Z" fill="#92a690"/><path d="M2.6 7.6 L9 1.3 M4.6 10.2 L11.2 3.6" stroke="#bfcdb9" stroke-width="0.8"/></g></svg>
<svg class="abs" style="left:240px;top:41px;" width="12" height="12" viewBox="0 0 12 12"><g transform="translate(0.7,0.6)"><path d="M1.4 1.4 L9.8 9.8 M9.8 1.4 L1.4 9.8" stroke="#d5c7bf" stroke-width="2.7" stroke-linecap="round"/><path d="M1.4 1.4 L9.8 9.8 M9.8 1.4 L1.4 9.8" stroke="#cdbbb5" stroke-width="1.1" stroke-linecap="round" opacity="0.6"/></g></svg>
<svg class="abs" style="left:262px;top:40px;" width="15" height="14" viewBox="0 0 15 14"><g transform="translate(0.7,0.8)"><g><path d="M7 0.5 L13.3 6.6 L10 6.6 L10 11.8 L4 11.8 L4 6.6 L0.7 6.6 Z" fill="#aebdca" stroke="#a2b0bd" stroke-width="0.7" stroke-linejoin="round"/></g></g></svg>
<svg class="abs" style="left:285px;top:41px;" width="15" height="13" viewBox="0 0 15 13"><g transform="translate(0.8,0)"><g transform="translate(0,12.4) scale(1,-1)"><path d="M7 0.5 L13.3 6.6 L10 6.6 L10 11.8 L4 11.8 L4 6.6 L0.7 6.6 Z" fill="#aebdca" stroke="#a2b0bd" stroke-width="0.7" stroke-linejoin="round"/></g></g></svg>
<svg class="abs" style="left:309px;top:40px;" width="14" height="14" viewBox="0 0 14 14"><rect x="0.5" y="0.5" width="10.5" height="12.5" fill="#bcc6ce" stroke="#c1c7cd"/><path d="M1.6 2.6 h8 M1.6 4.6 h8 M1.6 6.6 h8 M1.6 8.6 h8 M1.6 10.6 h6" stroke="#aab4be" stroke-width="0.8"/><path d="M11.6 0.6 v11" stroke="#a3abb3" stroke-width="1.2"/><path d="M9.6 10.6 L13.6 10.6 L11.6 13.6 Z" fill="#a3abb3"/></svg>
<div class="tree"></div>
<svg class="abs" style="left:214px;top:67px;" width="13" height="13" viewBox="0 0 13 13"><path d="M2.5 10.5 V0.8 M2.5 10.5 H12.2" stroke="#3c4a52" stroke-width="0.9" fill="none"/><path d="M0.8 3 L2.5 0 L4.2 3 Z" fill="#3c4a52"/><path d="M10.4 8.9 L13.3 10.5 L10.4 12.1 Z" fill="#3c4a52"/><circle cx="2.5" cy="10.5" r="1.3" fill="#d02838"/></svg>
<svg class="abs" style="left:196px;top:68px;" width="11" height="11" viewBox="0 0 11 11"><g transform="translate(0.5,0.5)"><circle cx="5" cy="5" r="4" fill="#fff" stroke="#b2b2b2" stroke-width="0.9"/><path d="M2.8 5 h4.4" stroke="#7c7c7c" stroke-width="1"/></g></svg>
<div class="abs" style="left:233px;top:64px;width:63px;height:19px;background:#4b70c6;outline:1px dotted rgba(225,205,150,.65);outline-offset:-1px"></div>
<span class="t" style="left:234.8px;top:68.6px;font-size:11.5px;color:#fff;transform-origin:0 0;transform:scaleX(0.9524);">Измерения</span>
<svg class="abs" style="left:233px;top:86px;" width="13" height="13" viewBox="0 0 13 13"><path d="M2.5 10.5 V0.8 M2.5 10.5 H12.2" stroke="#3c4a52" stroke-width="0.9" fill="none"/><path d="M0.8 3 L2.5 0 L4.2 3 Z" fill="#3c4a52"/><path d="M10.4 8.9 L13.3 10.5 L10.4 12.1 Z" fill="#3c4a52"/><circle cx="2.5" cy="10.5" r="1.3" fill="#d02838"/></svg>
<span class="t" style="left:253.9px;top:87.6px;font-size:11.5px;color:#111;transform-origin:0 0;transform:scaleX(0.9483);">Ребенок</span>
<svg class="abs" style="left:454px;top:85px;" width="17" height="16" viewBox="0 0 17 16"><g transform="translate(0.9,0.2)"><path d="M1.6 4.4 V2.6 Q1.6 0.6 3.5 0.6 Q5.4 0.6 5.4 2.6 V4.4" stroke="#566080" stroke-width="1.1" fill="none"/><rect x="0.5" y="4" width="6" height="4.6" rx="0.8" fill="#d4e0e4" stroke="#5c6684" stroke-width="0.9"/><rect x="3" y="5.4" width="1" height="2.2" fill="#5c6a7c"/><path d="M7.4 8 L11 6 L15.4 7.6 L15.4 12.6 L11.4 14.6 L7.4 12.8 Z" fill="url(#gCube1)"/><path d="M11.4 9.4 L15.4 7.6 L15.4 12.6 L11.4 14.6 Z" fill="#d8ac10"/><path d="M7.4 8 L11 6 L15.4 7.6 L11.4 9.4 Z" fill="#f8ec60"/></g></svg>
<svg class="abs" style="left:218px;top:106px;" width="7" height="12" viewBox="0 0 7 12"><path d="M1.4 3.4 L5.8 1 L5.8 7.6 L1 10.8 Z" fill="url(#gGreen)" stroke="url(#gGreen)" stroke-width="1.3" stroke-linejoin="round"/></svg>
<svg class="abs" style="left:196px;top:106px;" width="11" height="11" viewBox="0 0 11 11"><g transform="translate(0.5,0.5)"><circle cx="5" cy="5" r="4" fill="#fff" stroke="#b2b2b2" stroke-width="0.9"/><path d="M2.8 5 h4.4" stroke="#7c7c7c" stroke-width="1"/></g></svg>
<span class="t" style="left:234.8px;top:106.6px;font-size:11.5px;color:#111;transform-origin:0 0;transform:scaleX(0.9461);">Ресурсы</span>
<svg class="abs" style="left:237px;top:125px;" width="7" height="12" viewBox="0 0 7 12"><path d="M1.4 3.4 L5.8 1 L5.8 7.6 L1 10.8 Z" fill="url(#gGreen)" stroke="url(#gGreen)" stroke-width="1.3" stroke-linejoin="round"/></svg>
<span class="t" style="left:253.9px;top:125.6px;font-size:11.5px;color:#111;transform-origin:0 0;transform:scaleX(0.9819);">ГруппаДетскогоУчреждения</span>
<svg class="abs" style="left:454px;top:123px;" width="17" height="16" viewBox="0 0 17 16"><g transform="translate(0.9,0.2)"><path d="M1.6 4.4 V2.6 Q1.6 0.6 3.5 0.6 Q5.4 0.6 5.4 2.6 V4.4" stroke="#566080" stroke-width="1.1" fill="none"/><rect x="0.5" y="4" width="6" height="4.6" rx="0.8" fill="#d4e0e4" stroke="#5c6684" stroke-width="0.9"/><rect x="3" y="5.4" width="1" height="2.2" fill="#5c6a7c"/><path d="M7.4 8 L11 6 L15.4 7.6 L15.4 12.6 L11.4 14.6 L7.4 12.8 Z" fill="url(#gCube1)"/><path d="M11.4 9.4 L15.4 7.6 L15.4 12.6 L11.4 14.6 Z" fill="#d8ac10"/><path d="M7.4 8 L11 6 L15.4 7.6 L11.4 9.4 Z" fill="#f8ec60"/></g></svg>
<svg class="abs" style="left:237px;top:144px;" width="7" height="12" viewBox="0 0 7 12"><path d="M1.4 3.4 L5.8 1 L5.8 7.6 L1 10.8 Z" fill="url(#gGreen)" stroke="url(#gGreen)" stroke-width="1.3" stroke-linejoin="round"/></svg>
<span class="t" style="left:253.9px;top:144.6px;font-size:11.5px;color:#111;transform-origin:0 0;transform:scaleX(1.0008);">Льгота</span>
<svg class="abs" style="left:454px;top:142px;" width="17" height="16" viewBox="0 0 17 16"><g transform="translate(0.9,0.2)"><path d="M1.6 4.4 V2.6 Q1.6 0.6 3.5 0.6 Q5.4 0.6 5.4 2.6 V4.4" stroke="#566080" stroke-width="1.1" fill="none"/><rect x="0.5" y="4" width="6" height="4.6" rx="0.8" fill="#d4e0e4" stroke="#5c6684" stroke-width="0.9"/><rect x="3" y="5.4" width="1" height="2.2" fill="#5c6a7c"/><path d="M7.4 8 L11 6 L15.4 7.6 L15.4 12.6 L11.4 14.6 L7.4 12.8 Z" fill="url(#gCube1)"/><path d="M11.4 9.4 L15.4 7.6 L15.4 12.6 L11.4 14.6 Z" fill="#d8ac10"/><path d="M7.4 8 L11 6 L15.4 7.6 L11.4 9.4 Z" fill="#f8ec60"/></g></svg>
<svg class="abs" style="left:237px;top:163px;" width="7" height="12" viewBox="0 0 7 12"><path d="M1.4 3.4 L5.8 1 L5.8 7.6 L1 10.8 Z" fill="url(#gGreen)" stroke="url(#gGreen)" stroke-width="1.3" stroke-linejoin="round"/></svg>
<span class="t" style="left:253.9px;top:163.6px;font-size:11.5px;color:#111;transform-origin:0 0;transform:scaleX(0.9395);">СтавкаОплаты</span>
<svg class="abs" style="left:454px;top:161px;" width="17" height="16" viewBox="0 0 17 16"><g transform="translate(0.9,0.2)"><path d="M1.6 4.4 V2.6 Q1.6 0.6 3.5 0.6 Q5.4 0.6 5.4 2.6 V4.4" stroke="#566080" stroke-width="1.1" fill="none"/><rect x="0.5" y="4" width="6" height="4.6" rx="0.8" fill="#d4e0e4" stroke="#5c6684" stroke-width="0.9"/><rect x="3" y="5.4" width="1" height="2.2" fill="#5c6a7c"/><path d="M7.4 8 L11 6 L15.4 7.6 L15.4 12.6 L11.4 14.6 L7.4 12.8 Z" fill="url(#gCube1)"/><path d="M11.4 9.4 L15.4 7.6 L15.4 12.6 L11.4 14.6 Z" fill="#d8ac10"/><path d="M7.4 8 L11 6 L15.4 7.6 L11.4 9.4 Z" fill="#f8ec60"/></g></svg>
<svg class="abs" style="left:237px;top:182px;" width="7" height="12" viewBox="0 0 7 12"><path d="M1.4 3.4 L5.8 1 L5.8 7.6 L1 10.8 Z" fill="url(#gGreen)" stroke="url(#gGreen)" stroke-width="1.3" stroke-linejoin="round"/></svg>
<span class="t" style="left:253.9px;top:182.6px;font-size:11.5px;color:#111;transform-origin:0 0;transform:scaleX(0.9899);">Договор</span>
<svg class="abs" style="left:454px;top:180px;" width="17" height="16" viewBox="0 0 17 16"><g transform="translate(0.9,0.2)"><path d="M1.6 4.4 V2.6 Q1.6 0.6 3.5 0.6 Q5.4 0.6 5.4 2.6 V4.4" stroke="#566080" stroke-width="1.1" fill="none"/><rect x="0.5" y="4" width="6" height="4.6" rx="0.8" fill="#d4e0e4" stroke="#5c6684" stroke-width="0.9"/><rect x="3" y="5.4" width="1" height="2.2" fill="#5c6a7c"/><path d="M7.4 8 L11 6 L15.4 7.6 L15.4 12.6 L11.4 14.6 L7.4 12.8 Z" fill="url(#gCube1)"/><path d="M11.4 9.4 L15.4 7.6 L15.4 12.6 L11.4 14.6 Z" fill="#d8ac10"/><path d="M7.4 8 L11 6 L15.4 7.6 L11.4 9.4 Z" fill="#f8ec60"/></g></svg>
<svg class="abs" style="left:237px;top:201px;" width="7" height="12" viewBox="0 0 7 12"><path d="M1.4 3.4 L5.8 1 L5.8 7.6 L1 10.8 Z" fill="url(#gGreen)" stroke="url(#gGreen)" stroke-width="1.3" stroke-linejoin="round"/></svg>
<span class="t" style="left:253.9px;top:201.6px;font-size:11.5px;color:#111;transform-origin:0 0;transform:scaleX(0.9504);">Актуальность</span>
<svg class="abs" style="left:454px;top:199px;" width="17" height="16" viewBox="0 0 17 16"><g transform="translate(0.9,0.2)"><path d="M1.6 4.4 V2.6 Q1.6 0.6 3.5 0.6 Q5.4 0.6 5.4 2.6 V4.4" stroke="#566080" stroke-width="1.1" fill="none"/><rect x="0.5" y="4" width="6" height="4.6" rx="0.8" fill="#d4e0e4" stroke="#5c6684" stroke-width="0.9"/><rect x="3" y="5.4" width="1" height="2.2" fill="#5c6a7c"/><path d="M7.4 8 L11 6 L15.4 7.6 L15.4 12.6 L11.4 14.6 L7.4 12.8 Z" fill="url(#gCube1)"/><path d="M11.4 9.4 L15.4 7.6 L15.4 12.6 L11.4 14.6 Z" fill="#d8ac10"/><path d="M7.4 8 L11 6 L15.4 7.6 L11.4 9.4 Z" fill="#f8ec60"/></g></svg>
<svg class="abs" style="left:216px;top:223px;" width="11" height="5" viewBox="0 0 11 5"><rect x="0.5" y="0.5" width="9.4" height="3.6" rx="1.6" fill="url(#gBar)" stroke="#7c98b4" stroke-width="0.9"/></svg>
<span class="t" style="left:234.8px;top:220.6px;font-size:11.5px;color:#111;transform-origin:0 0;transform:scaleX(0.967);">Реквизиты</span>
<div class="red" style="left:220px;top:118px;width:206px;height:27px"></div>
<div class="btn" style="left:189px;top:702px;width:140px;height:21px"></div>
<div class="btn" style="left:189px;top:730px;width:140px;height:21px"></div>
<span class="t" style="left:194.9px;top:708.3px;font-size:11.5px;color:#262626;transform-origin:0 0;transform:scaleX(0.9579);">Стандартные реквизиты</span>
<span class="t" style="left:211.3px;top:736.4px;font-size:11.5px;color:#262626;transform-origin:0 0;transform:scaleX(0.9597);">Общие реквизиты</span>
<div class="btn" style="left:78px;top:761px;width:76px;height:20px"></div>
<span class="t" style="left:83px;top:765.9px;font-size:11.5px;color:#262626;transform-origin:0 0;transform:scaleX(0.9784);">Действия</span>
<div class="btn" style="left:160px;top:761px;width:76px;height:20px"></div>
<span class="t" style="left:179.5px;top:765.9px;font-size:11.5px;color:#262626;transform-origin:0 0;transform:scaleX(0.9251);">&lt;Назад</span>
<div class="btn" style="left:242px;top:761px;width:76px;height:20px"></div>
<span class="t" style="left:260.3px;top:765.9px;font-size:11.5px;color:#262626;transform-origin:0 0;transform:scaleX(0.9479);">Далее&gt;</span>
<div class="btn" style="left:325px;top:761px;width:76px;height:20px"></div>
<span class="t" style="left:341.1px;top:765.9px;font-size:11.5px;color:#262626;transform-origin:0 0;transform:scaleX(0.9685);">Закрыть</span>
<div class="btn" style="left:407px;top:761px;width:76px;height:20px"></div>
<span class="t" style="left:422.7px;top:765.9px;font-size:11.5px;color:#262626;transform-origin:0 0;transform:scaleX(0.9396);">Справка</span>
<svg class="abs" style="left:142px;top:770px;" width="8" height="5" viewBox="0 0 8 5"><g transform="translate(0.4,0)"><path d="M0 0 L7.4 0 L3.7 3.7 Z" fill="#9a9688"/></g></svg>
</div>
<svg class="abs" style="left:540px;top:470px;z-index:9;" width="510" height="16" viewBox="0 0 510 16"><path d="M2.5 6.5 L492 7.6" stroke="#e60000" stroke-width="3" stroke-linecap="round"/><path d="M490.5 3 L505 7.6 L490.5 12.2 Z" fill="#e60000"/></svg>
</body></html>
